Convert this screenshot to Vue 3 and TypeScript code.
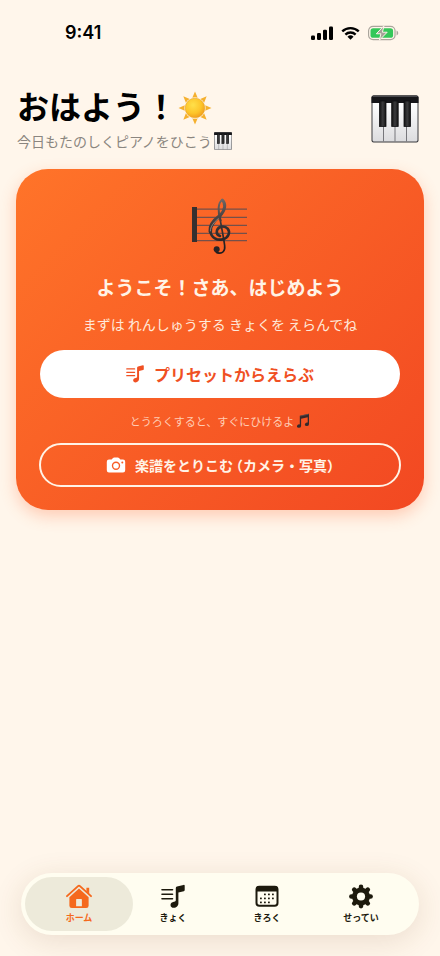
<script setup lang="ts">
import { ref } from 'vue'

type TabId = 'home' | 'songs' | 'log' | 'settings'

interface Tab {
  id: TabId
  label: string
}

const tabs: Tab[] = [
  { id: 'home', label: 'ホーム' },
  { id: 'songs', label: 'きょく' },
  { id: 'log', label: 'きろく' },
  { id: 'settings', label: 'せってい' },
]

const active = ref<TabId>('home')

const dots: [number, number][] = [
  [9, 9], [13, 9], [17, 9],
  [5, 13], [9, 13], [13, 13], [17, 13],
  [5, 17], [9, 17], [13, 17],
]

const rays = [0, 45, 90, 135, 180, 225, 270, 315]
const teeth = [0, 45, 90, 135]
</script>

<template>
  <div class="screen">
    <svg class="defs" width="0" height="0" aria-hidden="true">
      <defs>
        <linearGradient id="key-white" x1="0" y1="0" x2="0" y2="1">
          <stop offset="0" stop-color="#ffffff" />
          <stop offset="1" stop-color="#dcdcde" />
        </linearGradient>
        <linearGradient id="key-black" x1="0" y1="0" x2="1" y2="0">
          <stop offset="0" stop-color="#111111" />
          <stop offset="0.5" stop-color="#3c3c3e" />
          <stop offset="1" stop-color="#111111" />
        </linearGradient>
        <linearGradient id="clef-ink" gradientUnits="userSpaceOnUse" x1="120" y1="30" x2="175" y2="190">
          <stop offset="0" stop-color="#77706d" />
          <stop offset="0.45" stop-color="#3a3535" />
          <stop offset="1" stop-color="#1c1a1c" />
        </linearGradient>
        <radialGradient id="sun-core" cx="0.4" cy="0.35" r="0.7">
          <stop offset="0" stop-color="#ffe04a" />
          <stop offset="0.6" stop-color="#fdc52a" />
          <stop offset="1" stop-color="#f09a1c" />
        </radialGradient>
        <symbol id="piano" viewBox="0 0 48 48">
          <rect x="0.5" y="0.5" width="47" height="47" rx="2" fill="#3b3b3f" />
          <path d="M1.500 8h45v37a1.500 1.500 0 0 1-1.500 1.500h-42a1.500 1.500 0 0 1-1.500-1.500z" fill="url(#key-white)" />
          <path d="M12.500 30v16.500M24 30v16.500M35.500 30v16.500" stroke="#77777b" stroke-width="1" />
          <path d="M2.500 0.500h43a2 2 0 0 1 2 2V8H0.500V2.500a2 2 0 0 1 2-2z" fill="#17171a" />
          <path d="M1.500 1.500h45" stroke="#4a4a4e" stroke-width="1.200" />
          <g fill="url(#key-black)" stroke="#101012" stroke-width="0.800">
            <rect x="8.500" y="6" width="6.500" height="25.500" />
            <rect x="20.700" y="6" width="6.500" height="25.500" />
            <rect x="33" y="6" width="6.500" height="25.500" />
          </g>
        </symbol>
        <symbol id="note-list" viewBox="0 0 24 24">
          <path d="M1 5.200h10.500M1 9.700h10.500M1 14.200h10.500" stroke="currentColor" stroke-width="1.600" stroke-linecap="round" fill="none" />
          <path d="M14.800 3.500 Q14.800 2.300 16 2 L22.500 0.400 Q23.700 0.200 23.700 1.300 V5.600 Q23.700 6.500 22.800 6.700 L17.400 8 V18.800 C17.400 21.200 15.400 23.300 12.800 23.300 C10.700 23.300 9.500 22 9.500 20.400 C9.500 18.600 11 17.600 12.900 17.200 L14 17 Q14.800 16.800 14.800 15.800 Z" fill="currentColor" />
        </symbol>
      </defs>
    </svg>

    <header class="status">
      <time class="clock">9:41</time>
      <div class="signals">
        <svg class="cell" viewBox="0 0 22 14" aria-hidden="true">
          <rect x="0" y="9.500" width="4" height="4.500" rx="1.200" />
          <rect x="6" y="7" width="4" height="7" rx="1.200" />
          <rect x="12" y="3.800" width="4" height="10.200" rx="1.200" />
          <rect x="18" y="0.500" width="4" height="13.500" rx="1.200" />
        </svg>
        <svg class="wifi" viewBox="0 0 20 14" aria-hidden="true">
          <path d="M1.300 5.300a12.600 12.600 0 0 1 17.400 0M4.600 8.700a7.800 7.800 0 0 1 10.800 0" fill="none" stroke="#000" stroke-width="2.500" />
          <path d="M10 14 6.800 10.900a4.600 4.600 0 0 1 6.400 0z" />
        </svg>
        <svg class="battery" viewBox="0 0 32 16" aria-hidden="true">
          <rect x="0.600" y="1.100" width="27.300" height="13.800" rx="4.600" fill="none" stroke="#aaa59c" stroke-width="1.200" />
          <rect x="2.600" y="3" width="23.300" height="10" rx="2.800" fill="#34c759" />
          <path d="M29.500 5.500v5c1-.4 1.700-1.400 1.700-2.500s-.7-2.100-1.700-2.500z" fill="#aaa59c" />
          <path d="M16.500 0.500 8.600 8.800h4.700L11.700 15.500 19.800 7.200h-4.900z" fill="#a5a198" stroke="#fff6eb" stroke-width="1" stroke-linejoin="round" />
        </svg>
      </div>
    </header>

    <main class="content">
      <section class="greeting">
        <div>
          <h1>
            <span>おはよう！</span>
            <svg class="sun" viewBox="0 0 34 34" role="img" aria-label="太陽">
              <path
                v-for="angle in rays"
                :key="angle"
                d="M14.300 6.800 17 0.500l2.700 6.300q-2.700-1-5.400 0z"
                fill="#f5b02e"
                :transform="`rotate(${angle} 17 17)`"
              />
              <circle cx="17" cy="17" r="9.800" fill="url(#sun-core)" stroke="#e9a324" stroke-width="0.600" />
            </svg>
          </h1>
          <p class="subtitle">
            <span>今日もたのしくピアノをひこう</span>
            <svg class="piano-small" aria-hidden="true"><use href="#piano" /></svg>
          </p>
        </div>
        <svg class="piano-large" role="img" aria-label="ピアノ"><use href="#piano" /></svg>
      </section>

      <section class="card">
        <svg class="score" viewBox="60 9 180 198" role="img" aria-label="楽譜">
          <path d="M80 57.500h151M80 82h151M80 106h151M80 130h151M80 152h151" stroke="#75504a" stroke-width="3.500" />
          <rect x="66" y="51" width="15" height="105" fill="#37302f" />
          <g fill="none" stroke="url(#clef-ink)" stroke-linecap="round">
            <path d="M152 92C143 65 143 38 157 30" stroke-width="6" />
            <path d="M157 30C168 40 167 60 149 78" stroke-width="9" />
            <path d="M149 78C130 92 119 106 121 124" stroke-width="11" />
            <path d="M121 124C124 144 142 152 158 148C177 143 181 126 173 116C163 105 145 109 141 121C139 130 143 136 150 138" stroke-width="8" />
            <path d="M150 86C155 115 161 143 164 167C166 184 156 191 146 189" stroke-width="5" />
            <path d="M146 189C141 189 137 185 136 180" stroke-width="5" />
          </g>
          <circle cx="140" cy="178" r="9" fill="#282325" />
          <path d="M146 85C131 97 121 110 121 124" fill="none" stroke="#99908c" stroke-width="2.500" />
        </svg>
        <h2>ようこそ！さあ、はじめよう</h2>
        <p class="lead">まずは れんしゅうする きょくを えらんでね</p>
        <button type="button" class="primary">
          <svg class="icon-notes" aria-hidden="true"><use href="#note-list" /></svg>
          <span>プリセットからえらぶ</span>
        </button>
        <p class="hint">
          <span>とうろくすると、すぐにひけるよ</span>
          <svg class="quavers" viewBox="0 0 14 16" aria-hidden="true">
            <path d="M3.800 2.800 13 0.800V11.200a2.100 1.700 -20 1 1-1.300-1.600V4.300L5.100 5.800V13a2.100 1.700 -20 1 1-1.300-1.600z" fill="#35292b" />
            <path d="M4.200 3.100 12.700 1.200" stroke="#6b5c5c" stroke-width="0.600" />
          </svg>
        </p>
        <button type="button" class="outline">
          <svg class="icon-camera" viewBox="0 0 20 16" aria-hidden="true">
            <path d="M3 2.600h2.600L7 1Q7.500 0.500 8.200 0.500h3.600Q12.500 0.500 13 1l1.400 1.600H17A2.200 2.200 0 0 1 19.200 4.800v8.400A2.200 2.200 0 0 1 17 15.400H3A2.200 2.200 0 0 1 .800 13.200V4.800A2.200 2.200 0 0 1 3 2.600z" fill="#fff" />
            <circle cx="10" cy="8.800" r="3.500" fill="none" stroke="#f85d27" stroke-width="1.400" />
            <circle cx="16.300" cy="5.600" r="1" fill="#f85d27" />
          </svg>
          <span>楽譜をとりこむ<span class="paren open">（</span>カメラ・写真<span class="paren">）</span></span>
        </button>
      </section>
    </main>

    <nav class="tabs">
      <button
        v-for="tab in tabs"
        :key="tab.id"
        type="button"
        class="tab"
        :class="{ active: active === tab.id }"
        @click="active = tab.id"
      >
        <svg v-if="tab.id === 'home'" class="tab-icon home" viewBox="0 0 28 26" aria-hidden="true">
          <path d="M1.500 12.600 13 2.200Q14 1.300 15 2.200L26.500 12.600" fill="none" stroke="currentColor" stroke-width="2" stroke-linecap="round" stroke-linejoin="round" />
          <path d="M21.700 3.800h2.900v6.400l-2.900-2.600z" fill="currentColor" />
          <path fill-rule="evenodd" d="M14 4.700 24 13.700V22.500A2.500 2.500 0 0 1 21.500 25H6.500A2.500 2.500 0 0 1 4 22.500V13.700zM11 16.200V23.200H17V16.200Q17 15.500 16.300 15.500H11.700Q11 15.500 11 16.200z" fill="currentColor" />
        </svg>
        <svg v-else-if="tab.id === 'songs'" class="tab-icon" aria-hidden="true"><use href="#note-list" /></svg>
        <svg v-else-if="tab.id === 'log'" class="tab-icon" viewBox="0 0 24 24" aria-hidden="true">
          <rect x="1.500" y="2.300" width="21" height="19" rx="2.800" fill="none" stroke="currentColor" stroke-width="2" />
          <path d="M1 7V4.500Q1 1.500 4 1.500H20Q23 1.500 23 4.500V7z" fill="currentColor" />
          <rect
            v-for="[x, y] in dots"
            :key="`${x}-${y}`"
            :x="x"
            :y="y"
            width="1.800"
            height="1.800"
            rx="0.500"
            fill="currentColor"
          />
        </svg>
        <svg v-else class="tab-icon" viewBox="0 0 24 24" aria-hidden="true">
          <path
            v-for="angle in teeth"
            :key="angle"
            d="M12 2.400v19.200"
            stroke="currentColor"
            stroke-width="4.600"
            stroke-linecap="round"
            :transform="`rotate(${angle} 12 12)`"
          />
          <circle cx="12" cy="12" r="9" fill="currentColor" />
          <circle cx="12" cy="12" r="4.100" fill="#fffdf0" />
        </svg>
        <span>{{ tab.label }}</span>
      </button>
    </nav>
  </div>
</template>

<style>
body {
  background: #fff6eb;
}
</style>

<style scoped>
.screen {
  box-sizing: border-box;
  min-height: 100vh;
  display: flex;
  flex-direction: column;
  background: #fff6eb;
  color: #000;
  font-family: "Noto Sans CJK JP", sans-serif;
}

.defs {
  position: absolute;
}

svg {
  display: block;
  flex: none;
}

h1,
h2,
p {
  margin: 0;
}

button {
  border: 0;
  padding: 0;
  font-family: inherit;
  cursor: pointer;
}

.status {
  display: flex;
  align-items: center;
  justify-content: space-between;
  height: 24px;
  padding: 21px 41px 0 65px;
}

.clock {
  font: 600 18px/24px Inter, sans-serif;
}

.signals {
  display: flex;
  align-items: center;
  gap: 8px;
}

.cell {
  width: 22px;
  height: 14px;
}

.wifi {
  width: 19px;
  height: 14px;
}

.battery {
  width: 31px;
  height: 16px;
}

.content {
  flex: 1;
  padding: 40px 16px 24px;
}

.greeting {
  display: flex;
  align-items: center;
  justify-content: space-between;
  padding: 0 5px 0 1px;
}

h1 {
  display: flex;
  align-items: flex-end;
  gap: 1px;
  font-size: 32px;
  line-height: 40px;
  font-weight: 700;
  padding-bottom: 4px;
}

.sun {
  width: 34px;
  height: 34px;
}

.subtitle {
  display: flex;
  align-items: center;
  gap: 2px;
  font-size: 14px;
  line-height: 24px;
  color: #8b8680;
}

.piano-small {
  width: 18px;
  height: 18px;
}

.piano-large {
  width: 48px;
  height: 48px;
}

.card {
  display: flex;
  flex-direction: column;
  align-items: center;
  margin-top: 16px;
  padding: 24px 24px 23px;
  border-radius: 32px;
  background: linear-gradient(135deg, #ff7429 0%, #f24822 100%);
  box-shadow: 0 6px 16px rgba(255, 107, 53, 0.3);
  color: #fff3e6;
}

.score {
  width: 60px;
  height: 66px;
}

h2 {
  margin-top: 15px;
  font-size: 19px;
  line-height: 26px;
  font-weight: 700;
}

.lead {
  margin-top: 14px;
  font-size: 14px;
  line-height: 20px;
  color: #ffe9da;
}

.primary,
.outline {
  display: flex;
  align-items: center;
  justify-content: center;
  align-self: stretch;
  border-radius: 24px;
  font-weight: 700;
}

.primary {
  gap: 10px;
  height: 48px;
  margin-top: 16px;
  background: #fff;
  color: #f05023;
  font-size: 16px;
}

.icon-notes {
  width: 18px;
  height: 18px;
}

.hint {
  display: flex;
  align-items: center;
  gap: 2px;
  margin-top: 14px;
  font-size: 11px;
  line-height: 18px;
  color: #ffcdb5;
}

.quavers {
  width: 14px;
  height: 16px;
}

.outline {
  gap: 9px;
  height: 44px;
  margin: 13px -1px 0;
  border: 2px solid #fff3e6;
  background: transparent;
  color: #fff3e6;
  font-size: 14px;
}

.icon-camera {
  width: 20px;
  height: 16px;
}

.paren {
  font-feature-settings: "halt";
}

.open {
  margin-left: 3px;
}

.tabs {
  display: grid;
  grid-template-columns: repeat(4, 1fr);
  margin: 0 21px 21px;
  padding: 4px 11px;
  border-radius: 31px;
  background: #fffdf0;
  box-shadow: 0 6px 30px rgba(110, 70, 30, 0.14);
}

.tab {
  display: flex;
  flex-direction: column;
  align-items: center;
  gap: 2px;
  height: 54px;
  margin: 0 -7px;
  padding-top: 7px;
  box-sizing: border-box;
  border-radius: 27px;
  background: transparent;
  color: #1d1a0d;
  font-size: 9px;
  line-height: 14px;
  font-weight: 700;
}

.tab.active {
  background: #edeada;
  color: #f5691d;
}

.tab-icon {
  width: 24px;
  height: 25px;
}

.tab-icon.home {
  width: 28px;
}
</style>
